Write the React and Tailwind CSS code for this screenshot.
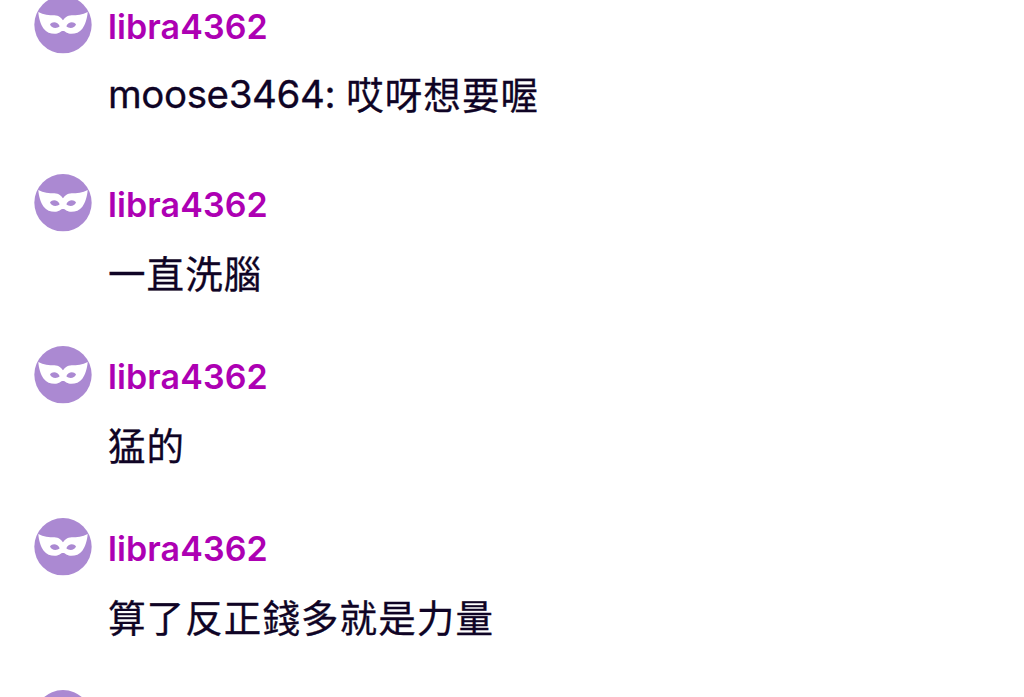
const messages = [
  { id: 1, user: 'libra4362', mention: 'moose3464:', text: '哎呀想要喔' },
  { id: 2, user: 'libra4362', text: '一直洗腦' },
  { id: 3, user: 'libra4362', text: '猛的' },
  { id: 4, user: 'libra4362', text: '算了反正錢多就是力量' },
];

const MaskAvatar = () => (
  <svg viewBox="0 0 174 174" className="h-[58px] w-[58px] shrink-0" aria-hidden="true">
    <circle cx="87" cy="86" r="86" fill="#ab89d2" />
    <path
      fill="#fff"
      fillRule="evenodd"
      d="M13 48C28 56 46 58 61 58C75 59 82 66 87 73C92 66 99 59 113 58C128 58 146 56 161 48C160 65 154 86 145 98C136 110 122 114 108 113C97 112 94 105 87 105C80 105 77 112 66 113C52 114 38 110 29 98C20 86 14 65 13 48ZM48 85C55 75 72 77 77 91C69 99 52 98 48 85ZM126 85C119 75 102 77 97 91C105 99 122 98 126 85Z"
    />
  </svg>
);

const Message = ({ user, mention, text }) => (
  <div className={`flex shrink-0 gap-4 ${mention ? 'h-[178px]' : 'h-[172px]'}`}>
    <MaskAvatar />
    <div className="flex flex-col">
      <p className="h-[61px] text-[34px] leading-[61px] font-semibold tracking-[0.1px] text-[#ad00b3]">{user}</p>
      <p
        className={`flex h-[60px] items-baseline text-[37.5px] leading-[60px] tracking-[1.1px] whitespace-nowrap text-[#0f0425] [-webkit-text-stroke:0.3px_#0f0425] ${
          mention ? 'mt-[7px]' : 'mt-[10px]'
        }`}
      >
        {mention && (
          <span className="mr-[11px] text-[38.5px] tracking-[-0.4px] [font-feature-settings:'calt'_0]">{mention}</span>
        )}
        <span className={mention ? 'translate-y-px' : ''}>{text}</span>
      </p>
    </div>
  </div>
);

const App = () => (
  <main className="h-[697px] overflow-hidden bg-white font-['Inter','Noto_Sans_CJK_TC',sans-serif]">
    <div className="-mt-1 flex flex-col pl-[34px]">
      {messages.map((message) => (
        <Message key={message.id} {...message} />
      ))}
      {/* next message, only its avatar has scrolled into view */}
      <MaskAvatar />
    </div>
  </main>
);

export default App;
